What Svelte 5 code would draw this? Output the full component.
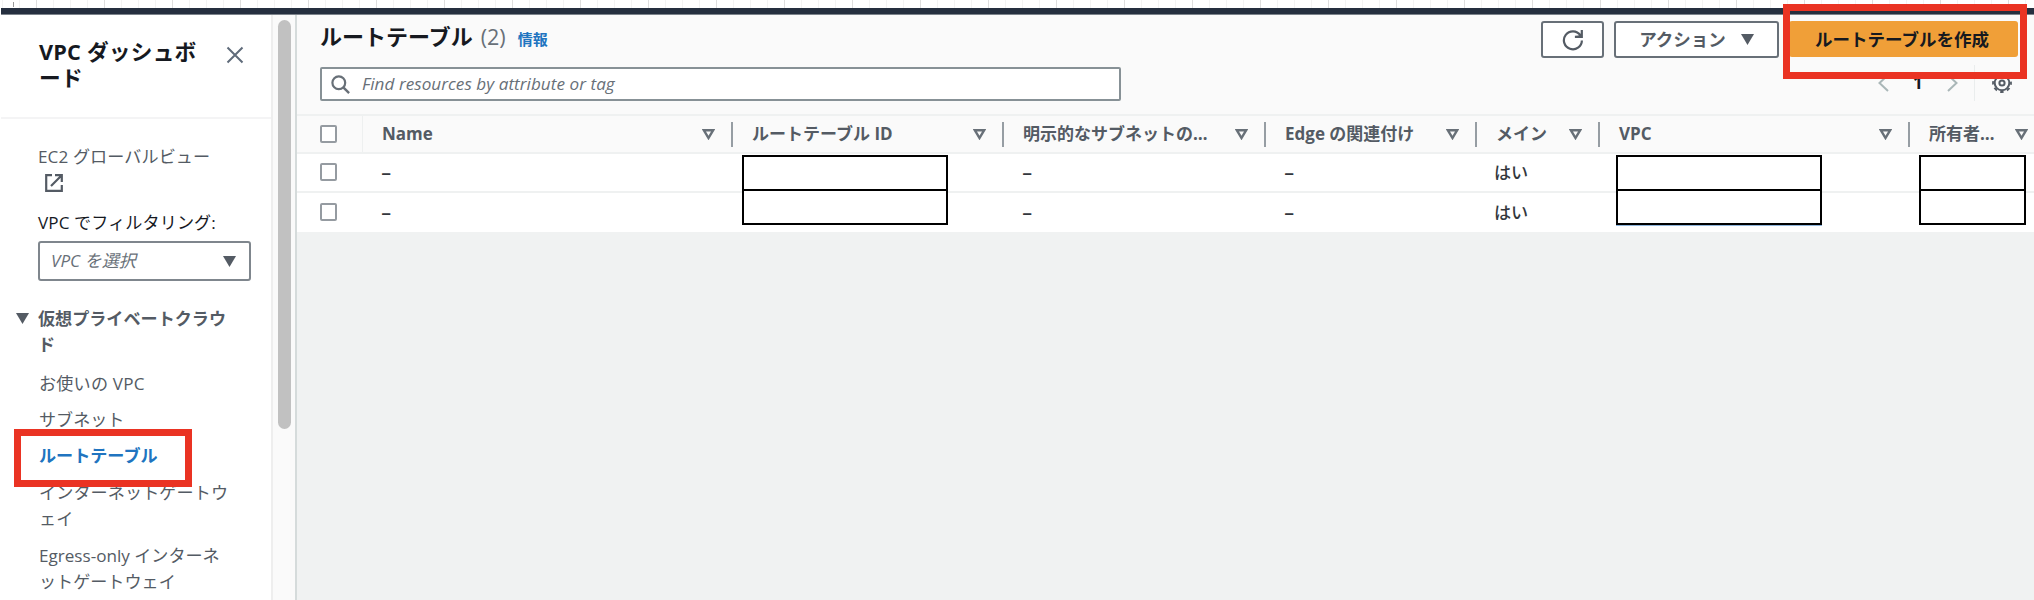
<script>
  const columns = [
    { label: 'Name', width: 370, kind: 'dash' },
    { label: 'ルートテーブル ID', width: 271, kind: 'masked', box: 206 },
    { label: '明示的なサブネットの…', width: 262, kind: 'dash' },
    { label: 'Edge の関連付け', width: 211, kind: 'dash' },
    { label: 'メイン', width: 123, kind: 'yes' },
    { label: 'VPC', width: 310, kind: 'masked', box: 206, link: true },
    { label: '所有者…', width: 123, kind: 'masked', box: 107 }
  ];
  const rows = [0, 1];
</script>

<div class="page">
  <div class="ruler"><i></i></div>
  <div class="topbar"></div>
  <div class="body">
    <nav class="side">
      <header class="side-head">
        <h2>VPC ダッシュボ<br />ード</h2>
        <svg class="close" width="18" height="18" viewBox="0 0 18 18"><path d="M1.5 1.5l15 15M16.5 1.5l-15 15" fill="none" stroke="#5f6b7a" stroke-width="2" /></svg>
      </header>
      <div class="side-main">
        <div class="ec2">EC2 グローバルビュー</div>
        <div class="ext">
          <svg width="18" height="18" viewBox="0 0 18 18"><path d="M7 1.2H1.2v15.6h15.6V11M10 1.2h6.8V8M16.5 1.5L6 12" fill="none" stroke="#545b64" stroke-width="2.2" /></svg>
        </div>
        <div class="label">VPC でフィルタリング:</div>
        <div class="select"><em>VPC を選択</em><svg width="13" height="11" viewBox="0 0 13 11"><path d="M0 0h13L6.5 11z" fill="#545b64" /></svg></div>
        <div class="group"><svg width="13" height="11" viewBox="0 0 13 11"><path d="M0 0h13L6.5 11z" fill="#545b64" /></svg><b>仮想プライベートクラウ<br />ド</b></div>
        <ul>
          <li>お使いの VPC</li>
          <li>サブネット</li>
          <li class="active">ルートテーブル</li>
          <li>インターネットゲートウ<br />ェイ</li>
          <li class="egress">Egress-only インターネ<br />ットゲートウェイ</li>
        </ul>
      </div>
    </nav>
    <div class="scroll"><div class="thumb"></div></div>
    <main>
      <section class="tools">
        <div class="title-row">
          <h1>ルートテーブル</h1><span class="count">(2)</span><a class="info">情報</a>
          <div class="buttons">
            <button class="refresh" aria-label="更新"><svg width="22" height="22" viewBox="0 0 22 22"><path d="M18.300 6.200A9 9 0 1 0 19.900 11.500" fill="none" stroke="#545b64" stroke-width="2.200" /><path d="M20.900 1v8h-8v-2.200l3.500-.3 2.300-2V1z" fill="#545b64" /></svg></button>
            <button class="action">アクション<svg width="13" height="11" viewBox="0 0 13 11"><path d="M0 0h13L6.5 11z" fill="#545b64" /></svg></button>
            <button class="create">ルートテーブルを作成</button>
          </div>
        </div>
        <div class="search-row">
          <div class="search">
            <svg width="19" height="19" viewBox="0 0 19 19"><circle cx="7.8" cy="7.8" r="6.4" fill="none" stroke="#687078" stroke-width="2.2" /><path d="M12.3 12.3l5.8 5.8" stroke="#687078" stroke-width="2.4" /></svg>
            <em>Find resources by attribute or tag</em>
          </div>
          <div class="pager">
            <svg width="11" height="18" viewBox="0 0 11 18"><path d="M10 1L1.5 9l8.500 8" fill="none" stroke="#aab7b8" stroke-width="2" /></svg>
            <b>1</b>
            <svg width="11" height="18" viewBox="0 0 11 18"><path d="M1 1l8.500 8L1 17" fill="none" stroke="#aab7b8" stroke-width="2" /></svg>
            <span class="rule"></span>
            <svg width="20" height="20" viewBox="0 0 20 20"><g fill="none" stroke="#545b64"><circle cx="10" cy="10" r="7.300" stroke-width="2" /><circle cx="10" cy="10" r="9" stroke-width="1.800" stroke-dasharray="3.530 3.540" stroke-dashoffset="1.760" /><circle cx="10" cy="10" r="2.600" stroke-width="2" /></g></svg>
          </div>
        </div>
      </section>
      <section class="table">
        <div class="tr head">
          <div class="check"><span class="box"></span></div>
          {#each columns as c}
            <div class="th" style="width:{c.width}px">
              <span>{c.label}</span>
              <svg width="13" height="11" viewBox="0 0 13 11"><path d="M1.800 1.200h9.400L6.500 9z" fill="none" stroke="#687078" stroke-width="2.400" /></svg>
            </div>
          {/each}
        </div>
        {#each rows as r}
          <div class="tr row" class:last={r === 1}>
            <div class="check"><span class="box"></span></div>
            {#each columns as c}
              <div class="td" style="width:{c.width}px">
                {#if c.kind === 'dash'}<span class="dash">–</span>
                {:else if c.kind === 'yes'}<span class="yes">はい</span>
                {:else}<span class="mask" class:second={r === 1} class:wide={c.link} class:link={c.link && r === 1} style="width:{c.box}px"></span>{/if}
              </div>
            {/each}
          </div>
        {/each}
      </section>
    </main>
  </div>
  <div class="mark mark-nav"></div>
  <div class="mark mark-create"></div>
</div>

<style>
  :global(body) { margin: 0; overflow: hidden; }
  * { box-sizing: border-box; }
  .page { position: relative; width: 2034px; height: 600px; overflow: hidden; display: flex; flex-direction: column; background: #fff; font: 17.1px/26px "Open Sans", "Noto Sans CJK JP", sans-serif; color: #545b64; }
  svg { display: block; flex: none; }
  h1, h2, ul { margin: 0; padding: 0; }
  .ruler { height: 8px; flex: none; padding: 2px 0 0 13px; background: repeating-linear-gradient(90deg, #dedede 0 1px, transparent 1px 68px) 36px 0, repeating-linear-gradient(90deg, #f3f3f3 0 1px, transparent 1px 17px) 2px 0, #fff; }
  .ruler i { display: block; width: 1px; height: 5px; background: #999; }
  .topbar { height: 7px; flex: none; margin-left: 1px; background: #252f3f; border-bottom: 1px solid #7c838b; }
  .body { flex: 1; display: flex; padding-left: 1px; min-height: 0; }
  .side { width: 270px; background: #fff; overflow: hidden; white-space: nowrap; }
  .side-head { height: 104px; border-bottom: 2px solid #f4f4f5; padding: 24px 27px 0 38px; display: flex; justify-content: space-between; }
  h2 { font-size: 21.7px; line-height: 26px; color: #16191f; letter-spacing: .2px; }
  .close { margin-top: 7px; }
  .side-main { padding: 25px 20px 0 37px; }
  .ec2 { letter-spacing: .1px; }
  .ext { height: 26px; padding: 4px 0 0 7px; }
  .label { margin-top: 14px; color: #16191f; letter-spacing: .1px; }
  .select { margin-top: 5px; height: 40px; width: 213px; border: 2px solid #7f868d; border-radius: 3px; display: flex; align-items: center; justify-content: space-between; padding: 0 13px 0 11px; color: #687078; }
  .group { margin: 25px 0 0 -22px; display: flex; }
  .group svg { margin: 7px 9px 0 0; }
  ul { list-style: none; margin-top: 13px; padding-left: 1px; }
  li { margin-bottom: 11px; }
  li:first-child { margin-bottom: 10px; letter-spacing: .2px; }
  li:nth-child(2) { margin-bottom: 10px; }
  li:nth-child(4) { letter-spacing: .1px; }
  .active { color: #2074c0; font-weight: 700; }
  .egress { letter-spacing: 0; }
  .scroll { width: 24px; background: #fafafa; border-left: 2px solid #eee; padding: 5px 0 0 5px; }
  .thumb { width: 13px; height: 409px; border-radius: 7px; background: #c1c1c1; }
  main { flex: 1; min-width: 0; border-left: 2px solid #d5dbdb; background: #f0f2f2; }
  .tools { height: 101px; background: #fafafa; border-bottom: 2px solid #eff1f1; padding: 6px 16px 0 23px; }
  .title-row { display: flex; height: 46px; }
  h1 { font-size: 22px; line-height: 31px; color: #16191f; }
  .count { font-size: 21.5px; line-height: 32px; margin-left: 8px; color: #687078; }
  .info { font-size: 15px; font-weight: 700; line-height: 36px; margin-left: 12px; color: #2074c0; }
  .buttons { margin-left: auto; display: flex; gap: 10px; }
  button { height: 37px; border: 2px solid #687078; border-radius: 3px; background: #fff; font: 700 17.5px/24px "Open Sans", "Noto Sans CJK JP", sans-serif; color: #545b64; display: flex; align-items: center; justify-content: center; padding: 0; }
  .refresh { width: 63px; }
  .action { width: 165px; gap: 15px; padding-bottom: 1px; }
  .create { width: 229px; height: 36px; border: 0; background: #f09f38; color: #16191f; padding: 0 3px 1px 0; }
  .search-row { display: flex; justify-content: space-between; }
  .search { width: 801px; height: 34px; border: 2px solid #879196; border-radius: 2px; background: #fff; display: flex; align-items: center; gap: 12px; padding-left: 9px; color: #687078; }
  .search em { letter-spacing: .05px; }
  .pager { display: flex; align-items: center; height: 34px; margin-top: -1px; padding-right: 6px; color: #16191f; }
  .pager b { width: 58px; text-align: center; }
  .rule { width: 1px; height: 36px; background: #eaeded; margin: 0 17px 0 16px; }
  .tr { display: flex; background: #fff; white-space: nowrap; }
  .head { height: 36px; background: #fafafa; }
  .row { height: 39px; border-top: 2px solid #eff1f1; }
  .row.last { height: 41px; }
  .row .check { padding-bottom: 1px; }
  .row.last .check { padding-bottom: 2px; }
  .check { width: 66px; flex: none; padding-left: 23px; display: flex; align-items: center; }
  .box { width: 17px; height: 18px; border: 2px solid #959ba1; border-radius: 2px; background: #fff; }
  .th { flex: none; display: flex; justify-content: space-between; align-items: center; padding: 0 18px 0 19px; font-weight: 700; font-size: 17px; color: #545b64; background: linear-gradient(#969da3, #969da3) right center / 2px 25px no-repeat; }
  .th:last-child { padding-right: 5px; background: none; }
  .th:nth-child(2) { box-shadow: -1px 0 #eef0f0; }
  .td { flex: none; position: relative; padding: 6px 0 0 17px; color: #33373d; }
  .last .td { padding-top: 7px; }
  .dash { display: inline-block; transform: scaleX(1.15); transform-origin: left; font-weight: 600; padding-left: 1px; }
  .yes { font-weight: 500; }
  .mask { position: absolute; left: 9px; top: 1px; height: 36px; border: 2px solid #000; background: #fff; z-index: 1; }
  .mask.second { top: -4px; }
  .mask.wide { left: 16px; }
  .mask.link { box-shadow: 0 1px #8eb5dc; }
  .mark { position: absolute; border: 7px solid #ea3323; z-index: 2; }
  .mark-nav { left: 14px; top: 429px; width: 178px; height: 58px; }
  .mark-create { left: 1783px; top: 4px; width: 244px; height: 75px; }
</style>
